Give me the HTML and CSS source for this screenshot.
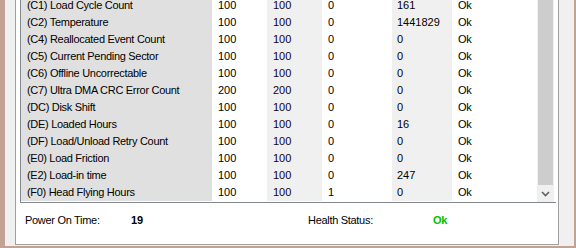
FILE: index.html
```html
<!DOCTYPE html>
<html lang="en">
<head>
    <meta charset="UTF-8">
    <title>SMART Attributes</title>
    <link rel="stylesheet" href="styles.css">
</head>
<body>
    <div class="window">
        <div class="group">
            <div class="list">
                <div class="rows">
                    <div class="row"><span class="name">(C1) Load Cycle Count</span><span class="cur">100</span><span class="worst">100</span><span class="thr">0</span><span class="raw">161</span><span class="st">Ok</span></div>
                    <div class="row"><span class="name">(C2) Temperature</span><span class="cur">100</span><span class="worst">100</span><span class="thr">0</span><span class="raw">1441829</span><span class="st">Ok</span></div>
                    <div class="row"><span class="name">(C4) Reallocated Event Count</span><span class="cur">100</span><span class="worst">100</span><span class="thr">0</span><span class="raw">0</span><span class="st">Ok</span></div>
                    <div class="row"><span class="name">(C5) Current Pending Sector</span><span class="cur">100</span><span class="worst">100</span><span class="thr">0</span><span class="raw">0</span><span class="st">Ok</span></div>
                    <div class="row"><span class="name">(C6) Offline Uncorrectable</span><span class="cur">100</span><span class="worst">100</span><span class="thr">0</span><span class="raw">0</span><span class="st">Ok</span></div>
                    <div class="row"><span class="name">(C7) Ultra DMA CRC Error Count</span><span class="cur">200</span><span class="worst">200</span><span class="thr">0</span><span class="raw">0</span><span class="st">Ok</span></div>
                    <div class="row"><span class="name">(DC) Disk Shift</span><span class="cur">100</span><span class="worst">100</span><span class="thr">0</span><span class="raw">0</span><span class="st">Ok</span></div>
                    <div class="row"><span class="name">(DE) Loaded Hours</span><span class="cur">100</span><span class="worst">100</span><span class="thr">0</span><span class="raw">16</span><span class="st">Ok</span></div>
                    <div class="row"><span class="name">(DF) Load/Unload Retry Count</span><span class="cur">100</span><span class="worst">100</span><span class="thr">0</span><span class="raw">0</span><span class="st">Ok</span></div>
                    <div class="row"><span class="name">(E0) Load Friction</span><span class="cur">100</span><span class="worst">100</span><span class="thr">0</span><span class="raw">0</span><span class="st">Ok</span></div>
                    <div class="row"><span class="name">(E2) Load-in time</span><span class="cur">100</span><span class="worst">100</span><span class="thr">0</span><span class="raw">247</span><span class="st">Ok</span></div>
                    <div class="row"><span class="name">(F0) Head Flying Hours</span><span class="cur">100</span><span class="worst">100</span><span class="thr">1</span><span class="raw">0</span><span class="st">Ok</span></div>
                </div>
                <div class="vscroll">
                    <div class="thumb"></div>
                    <div class="arrow">
                        <svg width="9" height="6" viewBox="0 0 9 6"><path d="M1 1 L4.5 4.5 L8 1" fill="none" stroke="#606060" stroke-width="1.6"/></svg>
                    </div>
                </div>
            </div>
            <div class="status">
                <span class="label">Power On Time:</span>
                <span class="hours">19</span>
                <span class="label health">Health Status:</span>
                <span class="ok">Ok</span>
            </div>
        </div>
    </div>
</body>
</html>
```

FILE: styles.css
```css
/* Ventana base */
body {
    margin: 0;
    width: 576px;
    height: 248px;
    overflow: hidden;
    background: #c2a295;
    font-family: 'Liberation Sans', Arial, sans-serif;
    font-size: 11px;
    color: #000;
}

.window {
    margin: 0 2px 0 5px;
    height: 246px;
    background: #f0f0f0;
    padding-left: 10px;
    padding-right: 15px;
}

/* Marco del grupo */
.group {
    height: 244px;
    background: #fff;
    border-left: 1px solid #a0a0a0;
    border-right: 1px solid #a0a0a0;
    border-bottom: 1px solid #a0a0a0;
    padding: 0 2px 0 4px;
    display: flex;
    flex-direction: column;
}

/* Lista de atributos */
.list {
    height: 202px;
    border-left: 1px solid #828790;
    border-bottom: 1px solid #828790;
    display: flex;
    overflow: hidden;
}

.rows {
    margin-top: -3px;
}

.row {
    display: grid;
    grid-template-columns: 191px 55px 55px 70px 60px 85px;
    height: 17px;
    line-height: 17px;
}

.row span {
    padding-left: 6px;
    white-space: nowrap;
}

.row .name {
    background: #e0e0e0;
    letter-spacing: -0.3px;
}

.row .worst {
    background: #f0f0f0;
    color: #10001c;
}

.row .raw {
    background: #f0f0f0;
    padding-left: 5px;
}

.row .st {
    letter-spacing: -0.3px;
}

/* Barra de desplazamiento */
.vscroll {
    width: 17px;
    background: #f0f0f0;
    display: flex;
    flex-direction: column;
}

.thumb {
    flex: 1;
    margin: 0 1px 1px 1px;
    background: #cdcdcd;
}

.arrow {
    height: 16px;
    display: flex;
    align-items: center;
    justify-content: center;
}

/* Estado inferior */
.status {
    display: flex;
    align-items: flex-start;
    height: 41px;
    padding: 11px 0 0 5px;
    box-sizing: border-box;
    line-height: 13px;
}

.status .label {
    width: 106px;
    letter-spacing: -0.3px;
}

.status .hours {
    font-weight: bold;
    width: 177px;
}

.status .health {
    width: 125px;
}

.status .ok {
    font-weight: bold;
    color: #00c000;
    letter-spacing: -0.3px;
}
```
